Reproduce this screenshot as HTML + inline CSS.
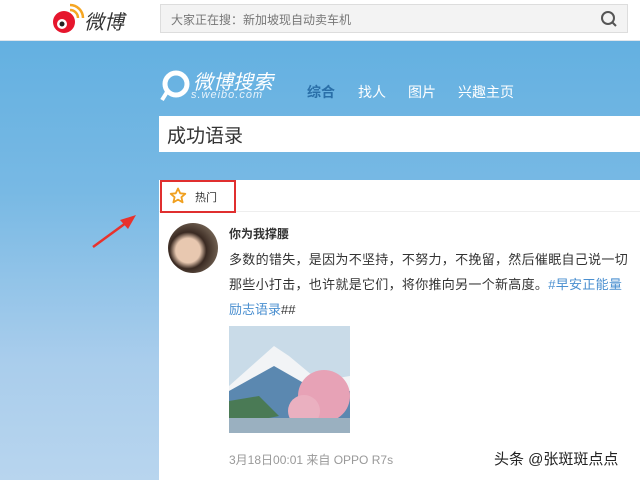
<!DOCTYPE html>
<html><head><meta charset="utf-8"><style>
*{margin:0;padding:0;box-sizing:border-box}
body{width:640px;height:480px;overflow:hidden;position:relative;font-family:"Liberation Sans","Noto Sans CJK SC",sans-serif;background:linear-gradient(180deg,#5eaee0 0%,#78b9e4 40%,#a9cdec 75%,#b8d5ee 100%)}
.hdr{position:absolute;left:0;top:0;width:640px;height:41px;background:#fff;border-bottom:1px solid #dfe6ec}
.logo{position:absolute;top:6px;font-size:20px;font-style:italic;color:#333}
.sbox{position:absolute;left:160px;top:4px;width:468px;height:29px;background:#f3f3f3;border:1px solid #ddd;font-size:12px;color:#777;padding:6px 0 0 10px}
.a{position:absolute}
.card{position:absolute;left:159px;top:180px;width:481px;height:300px;background:#fff}
</style></head><body>
<div class="hdr">
 <svg class="a" style="left:46px;top:2px" width="40" height="34"><circle cx="18" cy="20" r="11" fill="#e6162d"/><circle cx="16" cy="22" r="5" fill="#fff"/><circle cx="16" cy="22" r="2.5" fill="#222"/><path d="M24 8a8 8 0 0 1 8 8" stroke="#f5a623" stroke-width="2.5" fill="none"/><path d="M24 3a13 13 0 0 1 13 13" stroke="#f5a623" stroke-width="2.5" fill="none"/></svg>
 <div class="logo" style="left:84px">微博</div>
 <div class="sbox">大家正在搜：新加坡现自动卖车机</div>
 <svg class="a" style="left:600px;top:10px" width="18" height="18"><circle cx="8" cy="8" r="6" stroke="#555" stroke-width="2" fill="none"/><path d="M12 12l4 4" stroke="#555" stroke-width="2"/></svg>
</div>
<svg class="a" style="left:160px;top:68px" width="30" height="36"><circle cx="16" cy="16" r="11" fill="none" stroke="#fff" stroke-width="5"/><path d="M7 24l-5 8" stroke="#fff" stroke-width="4"/></svg>
<div class="a" style="left:193px;top:66px;font-size:20px;font-style:italic;color:#fff">微博搜索</div>
<div class="a" style="left:191px;top:89px;font-size:11px;font-style:italic;color:#e8f3fb;letter-spacing:1px">s.weibo.com</div>
<div class="a" style="left:307px;top:82px;font-size:14px;color:#2a6fa8;font-weight:bold">综合</div>
<div class="a" style="left:358px;top:82px;font-size:14px;color:#fff">找人</div>
<div class="a" style="left:408px;top:82px;font-size:14px;color:#fff">图片</div>
<div class="a" style="left:458px;top:82px;font-size:14px;color:#fff">兴趣主页</div>
<div class="a" style="left:159px;top:116px;width:481px;height:36px;background:#fff;font-size:19px;color:#333;padding:5px 0 0 8px">成功语录</div>
<svg class="a" style="left:90px;top:210px" width="50" height="40"><path d="M3 37L40 10" stroke="#e8322d" stroke-width="2.5"/><path d="M46 5L30 10L38 19Z" fill="#e8322d"/></svg>
<div class="card">
 <div class="a" style="left:0;top:31px;width:481px;height:1px;background:#eee"></div>
 <div class="a" style="left:1px;top:0;width:76px;height:33px;border:2px solid #e02f2f"></div>
 <svg class="a" style="left:10px;top:7px" width="18" height="18"><path d="M9 1.5L11.2 6.3L16.3 6.8L12.4 10.2L13.6 15.3L9 12.6L4.4 15.3L5.6 10.2L1.7 6.8L6.8 6.3Z" fill="none" stroke="#f0a020" stroke-width="1.8" stroke-linejoin="round"/></svg>
 <div class="a" style="left:36px;top:9px;font-size:11px;color:#333">热门</div>
 <div class="a" style="left:9px;top:43px;width:50px;height:50px;border-radius:50%;background:radial-gradient(circle at 40% 55%,#e8c8b0 0 30%,#3a2a22 45%,#7a6a5a 80%)"></div>
 <div class="a" style="left:70px;top:45px;font-size:12px;font-weight:bold;color:#333">你为我撑腰</div>
 <div class="a" style="left:70px;top:69px;font-size:13px;color:#333;white-space:nowrap;letter-spacing:0.3px">多数的错失，是因为不坚持，不努力，不挽留，然后催眠自己说一切</div>
 <div class="a" style="left:70px;top:94px;font-size:13px;color:#333;white-space:nowrap;letter-spacing:0.3px">那些小打击，也许就是它们，将你推向另一个新高度。<span style="color:#4a8fd0">#早安正能量</span></div>
 <div class="a" style="left:70px;top:119px;font-size:13px;color:#4a8fd0">励志语录<span style="color:#333">##</span></div>
 <svg class="a" style="left:70px;top:146px" width="121" height="107"><rect width="121" height="107" fill="#c9dbe8"/><path d="M0 60L45 20L60 30L90 55L121 50V107H0Z" fill="#f2f4f6"/><path d="M0 65L45 40L80 60L121 65V107H0Z" fill="#5b88b0"/><path d="M0 75L30 70L50 90L0 100Z" fill="#4a7a55"/><circle cx="95" cy="70" r="26" fill="#e7a2b6"/><circle cx="75" cy="85" r="16" fill="#eab0c0"/><rect y="92" width="121" height="15" fill="#9ab0c0"/></svg>
 <div class="a" style="left:70px;top:271px;font-size:12px;color:#999">3月18日00:01 来自 OPPO R7s</div>
 <div class="a" style="left:335px;top:268px;font-size:15px;color:#222;text-shadow:0 0 2px #fff">头条 @张斑斑点点</div>
</div>
</body></html>
